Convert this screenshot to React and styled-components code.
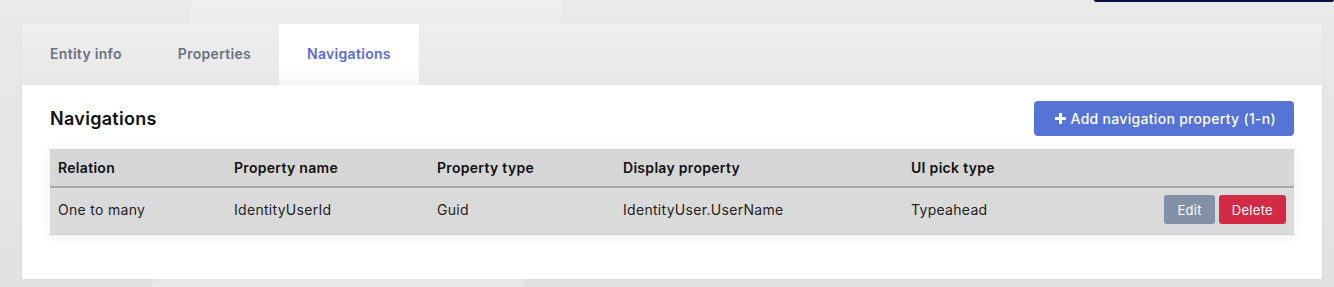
import styled, { createGlobalStyle } from 'styled-components';

const GlobalStyle = createGlobalStyle`
  html, body {
    margin: 0;
    padding: 0;
  }
  body {
    font-family: Inter, "Noto Sans", sans-serif;
    letter-spacing: 0.3px;
    background: #e6e6e6;
    color: #222;
  }
`;

const columns = [
  { key: 'relation', title: 'Relation', width: 176 },
  { key: 'name', title: 'Property name', width: 203 },
  { key: 'type', title: 'Property type', width: 186 },
  { key: 'display', title: 'Display property', width: 288 },
  { key: 'pick', title: 'UI pick type', width: 'auto' },
];

const rows = [
  {
    relation: 'One to many',
    name: 'IdentityUserId',
    type: 'Guid',
    display: 'IdentityUser.UserName',
    pick: 'Typeahead',
  },
];

const tabs = ['Entity info', 'Properties', 'Navigations'];

const Page = styled.div`
  min-height: 287px;
  box-sizing: border-box;
  padding: 0 12px 8px 22px;
  background:
    linear-gradient(98deg, transparent 0 14%, rgba(255,255,255,0.25) 14% 41%, transparent 41%),
    linear-gradient(180deg, rgba(255,255,255,0.15), rgba(0,0,0,0.02)),
    #e6e6e6;
`;

const TopBar = styled.div`
  display: flex;
  justify-content: flex-end;
  height: 2px;
  margin-right: -12px;
  margin-bottom: 22px;
`;

const UserMenu = styled.div`
  width: 240px;
  height: 2px;
  background: #0c1244;
  border-radius: 0 0 3px 3px;
`;

const Card = styled.div`
  width: 1300px;
  background: #fff;
  box-shadow: 0 1px 4px rgba(0, 0, 0, 0.04);
`;

const TabBar = styled.div`
  display: flex;
  height: 61px;
  background: linear-gradient(180deg, #eeeeee 0%, #e8e8e9 100%);
`;

const Tab = styled.div`
  display: flex;
  align-items: center;
  padding: 0 28px 2px 28px;
  font-size: 14px;
  font-weight: 600;
  color: ${(p) => (p.$active ? '#5a6bd5' : '#6b7280')};
  background: ${(p) => (p.$active ? 'linear-gradient(180deg, #fff 70%, #f6f6f8 100%)' : 'transparent')};
`;

const Body = styled.div`
  padding: 16px 28px 44px 28px;
`;

const HeadRow = styled.div`
  display: flex;
  align-items: center;
  justify-content: space-between;
  margin-bottom: 13px;
`;

const Heading = styled.h2`
  margin: 0;
  font-size: 18px;
  font-weight: 600;
  color: #111;
`;

const PrimaryButton = styled.button`
  display: flex;
  align-items: center;
  gap: 4px;
  height: 35px;
  padding: 0 18px 0 20px;
  border: none;
  border-radius: 4px;
  background: #5673d6;
  color: #fff;
  font-family: inherit;
  letter-spacing: inherit;
  font-size: 14px;
  font-weight: 500;
`;

const Table = styled.table`
  width: 100%;
  border-collapse: collapse;
  table-layout: fixed;
  box-shadow: 0 2px 10px rgba(0, 0, 0, 0.08);
`;

const Th = styled.th`
  height: 37px;
  padding: 0 8px;
  text-align: left;
  font-size: 14px;
  font-weight: 600;
  color: #111;
  background: #d6d6d6;
  border-bottom: 2px solid #a9a9a9;
`;

const Td = styled.td`
  height: 43px;
  padding: 0 8px 3px 8px;
  font-size: 14px;
  color: #222;
  background: #dadada;
  border-bottom: 1px solid #cfd0dc;
`;

const Actions = styled.div`
  display: flex;
  justify-content: flex-end;
  gap: 4px;
`;

const SmallButton = styled.button`
  height: 29px;
  padding: 0 13px;
  border: none;
  border-radius: 3px;
  font-family: inherit;
  letter-spacing: inherit;
  font-size: 13px;
  color: #fff;
  background: ${(p) => (p.$danger ? '#d32a45' : '#8291a6')};
`;

const PlusIcon = () => (
  <svg width="13" height="13" viewBox="0 0 13 13">
    <path d="M6.5 1v11M1 6.5h11" stroke="#fff" strokeWidth="3" />
  </svg>
);

export default function App() {
  return (
    <>
      <GlobalStyle />
      <Page>
        <TopBar>
          <UserMenu />
        </TopBar>
        <Card>
          <TabBar>
            {tabs.map((t) => (
              <Tab key={t} $active={t === 'Navigations'}>
                {t}
              </Tab>
            ))}
          </TabBar>
          <Body>
            <HeadRow>
              <Heading>Navigations</Heading>
              <PrimaryButton>
                <PlusIcon />
                Add navigation property (1-n)
              </PrimaryButton>
            </HeadRow>
            <Table>
              <colgroup>
                {columns.map((c) => (
                  <col key={c.key} style={{ width: c.width }} />
                ))}
                <col />
              </colgroup>
              <thead>
                <tr>
                  {columns.map((c) => (
                    <Th key={c.key}>{c.title}</Th>
                  ))}
                  <Th />
                </tr>
              </thead>
              <tbody>
                {rows.map((r, i) => (
                  <tr key={i}>
                    {columns.map((c) => (
                      <Td key={c.key}>{r[c.key]}</Td>
                    ))}
                    <Td>
                      <Actions>
                        <SmallButton>Edit</SmallButton>
                        <SmallButton $danger>Delete</SmallButton>
                      </Actions>
                    </Td>
                  </tr>
                ))}
              </tbody>
            </Table>
          </Body>
        </Card>
      </Page>
    </>
  );
}
